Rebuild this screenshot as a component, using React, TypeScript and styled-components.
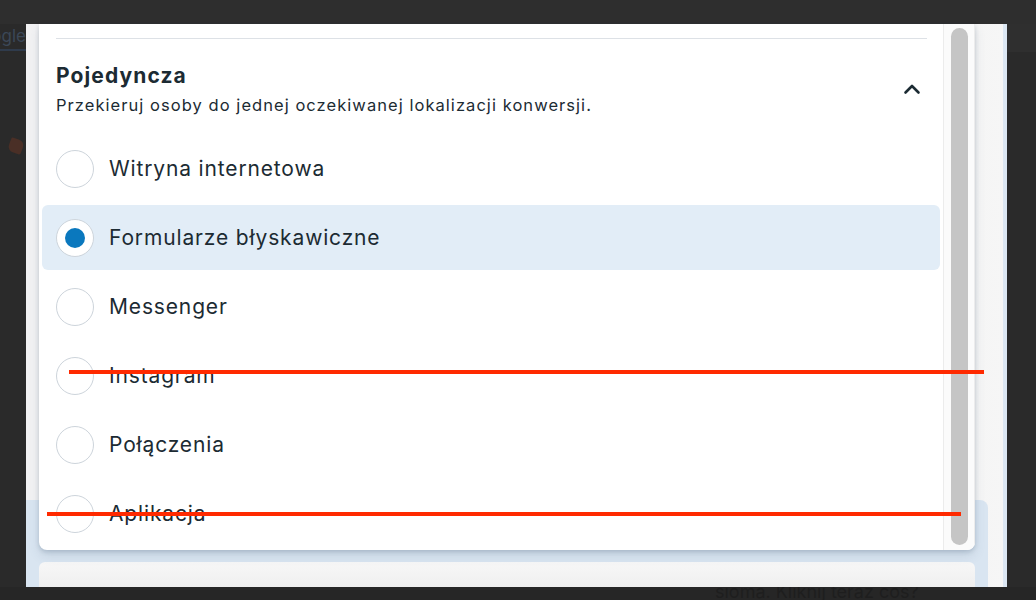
import React from 'react';
import styled, { createGlobalStyle } from 'styled-components';

const GlobalStyle = createGlobalStyle`
  html, body {
    margin: 0;
    padding: 0;
    background: #2c2c2c;
  }
  * {
    box-sizing: border-box;
  }
`;

type Option = {
  id: string;
  label: string;
};

const options: Option[] = [
  { id: 'web', label: 'Witryna internetowa' },
  { id: 'forms', label: 'Formularze błyskawiczne' },
  { id: 'messenger', label: 'Messenger' },
  { id: 'instagram', label: 'Instagram' },
  { id: 'calls', label: 'Połączenia' },
  { id: 'app', label: 'Aplikacja' }
];

const Frame = styled.div`
  position: relative;
  width: 1036px;
  height: 600px;
  overflow: hidden;
  display: flex;
  flex-direction: column;
  background: #2c2c2c;
  font-family: Inter, 'Noto Sans', sans-serif;
`;

const TopBar = styled.div`
  height: 24px;
  flex-shrink: 0;
  background: #2e2e2e;
`;

const Middle = styled.div`
  display: flex;
  height: 563px;
  flex-shrink: 0;
`;

const LeftShade = styled.div`
  width: 26px;
  flex-shrink: 0;
  background: #2a2a2a;
  display: flex;
  flex-direction: column;
  align-items: flex-end;
  overflow: hidden;
`;

const ShadeTab = styled.div`
  margin-top: 2px;
  height: 25px;
  width: 26px;
  border-bottom: 2px solid #2f3b4c;
  color: #3b4757;
  font-size: 17px;
  line-height: 20px;
  white-space: nowrap;
  direction: rtl;
  overflow: hidden;
`;

const ShadeIcon = styled.div`
  margin-top: 88px;
  margin-right: 3px;
  width: 14px;
  height: 14px;
  border-radius: 2px 6px 2px 6px;
  background: #4a2f26;
  transform: rotate(20deg);
`;

const Window = styled.div`
  position: relative;
  width: 981px;
  flex-shrink: 0;
  display: flex;
  flex-direction: column;
  justify-content: flex-end;
  background: linear-gradient(
    to right,
    #f2f2f3 0,
    #f2f2f3 13px,
    #ffffff 13px,
    #ffffff 949px,
    #f5f5f5 949px,
    #f6f6f6 977px,
    #dce7f3 977px
  );
`;

const BluePanel = styled.div`
  width: 962px;
  height: 87px;
  padding: 62px 13px 0 13px;
  background: #d9e5f1;
  border-radius: 0 8px 0 0;
`;

const InnerCard = styled.div`
  height: 100%;
  border-radius: 6px 6px 0 0;
  background: linear-gradient(to bottom, #f7f7f7, #efefef);
`;

const Popup = styled.div`
  position: absolute;
  top: 0;
  left: 13px;
  width: 936px;
  height: 526px;
  display: flex;
  background: #ffffff;
  border-radius: 0 0 8px 8px;
  box-shadow: 0 2px 4px rgba(60, 80, 110, 0.22), 0 6px 12px rgba(60, 80, 110, 0.12);
  overflow: hidden;
`;

const Content = styled.div`
  flex: 1;
  padding: 14px 3px 4px 3px;
  overflow: hidden;
`;

const Divider = styled.div`
  height: 1px;
  margin: 0 13px 0 14px;
  background: #dde1e6;
`;

const Header = styled.div`
  display: flex;
  align-items: center;
  justify-content: space-between;
  margin-top: 24px;
  padding: 0 16px 0 14px;
`;

const HeaderText = styled.div`
  display: flex;
  flex-direction: column;
  gap: 7px;
`;

const Title = styled.div`
  font-size: 21px;
  line-height: 25px;
  font-weight: 700;
  letter-spacing: 1.1px;
  color: #1c2b33;
`;

const Subtitle = styled.div`
  font-size: 16.5px;
  line-height: 20px;
  letter-spacing: 1.05px;
  color: #1c2b33;
`;

const Chevron = styled.svg`
  width: 24px;
  height: 24px;
  flex-shrink: 0;
`;

const OptionList = styled.div`
  display: flex;
  flex-direction: column;
  gap: 4px;
  margin-top: 21px;
`;

const OptionRow = styled.div<{ selected?: boolean }>`
  display: flex;
  align-items: center;
  gap: 15px;
  height: 65px;
  padding: 0 14px;
  border-radius: 6px;
  background: ${({ selected }) => (selected ? '#e2edf7' : 'transparent')};
`;

const Radio = styled.div`
  width: 38px;
  height: 38px;
  flex-shrink: 0;
  border-radius: 50%;
  border: 1px solid #cdd4db;
  background: #ffffff;
  display: flex;
  align-items: center;
  justify-content: center;
`;

const RadioDot = styled.div`
  width: 20px;
  height: 20px;
  border-radius: 50%;
  background: #0a78be;
`;

const OptionLabel = styled.span`
  font-size: 21px;
  line-height: 24px;
  letter-spacing: 0.85px;
  color: #1c2b33;
`;

const ScrollTrack = styled.div`
  width: 32px;
  flex-shrink: 0;
  display: flex;
  padding: 4px 6px 5px 7px;
  background: #fbfbfb;
  border-left: 1px solid #ececec;
  border-right: 1px solid #ececec;
`;

const ScrollThumb = styled.div`
  flex: 1;
  border-radius: 9px;
  background: #c5c5c5;
`;

const RightShade = styled.div`
  flex: 1;
  background: linear-gradient(to bottom, #2f2f2f 0, #2f2f2f 28px, #2a2a2a 28px);
`;

const BottomBar = styled.div`
  flex: 1;
  background: #262626;
  padding-left: 715px;
  overflow: hidden;
`;

const BottomText = styled.div`
  margin-top: -5px;
  font-size: 18px;
  line-height: 20px;
  color: #1e1e1e;
  white-space: nowrap;
`;

const Annotation = styled.div`
  position: absolute;
  height: 4px;
  background: #ff2a00;
`;

const App: React.FC = () => {
  const selectedId = 'forms';

  return (
    <>
      <GlobalStyle />
      <Frame>
        <TopBar />
        <Middle>
          <LeftShade>
            <ShadeTab>Google</ShadeTab>
            <ShadeIcon />
          </LeftShade>
          <Window>
            <BluePanel>
              <InnerCard />
            </BluePanel>
            <Popup>
              <Content>
                <Divider />
                <Header>
                  <HeaderText>
                    <Title>Pojedyncza</Title>
                    <Subtitle>
                      Przekieruj osoby do jednej oczekiwanej lokalizacji konwersji.
                    </Subtitle>
                  </HeaderText>
                  <Chevron viewBox="0 0 24 24" fill="none">
                    <path
                      d="M5.5 15.5L12 9l6.5 6.5"
                      stroke="#1c2b33"
                      strokeWidth="2.6"
                      strokeLinecap="round"
                      strokeLinejoin="round"
                    />
                  </Chevron>
                </Header>
                <OptionList>
                  {options.map((option) => (
                    <OptionRow key={option.id} selected={option.id === selectedId}>
                      <Radio>{option.id === selectedId && <RadioDot />}</Radio>
                      <OptionLabel>{option.label}</OptionLabel>
                    </OptionRow>
                  ))}
                </OptionList>
              </Content>
              <ScrollTrack>
                <ScrollThumb />
              </ScrollTrack>
            </Popup>
          </Window>
          <RightShade />
        </Middle>
        <BottomBar>
          <BottomText>sioma. Kliknij teraz coś?</BottomText>
        </BottomBar>
        <Annotation style={{ left: 69, top: 370, width: 915 }} />
        <Annotation style={{ left: 47, top: 512, width: 914 }} />
      </Frame>
    </>
  );
};

export default App;
